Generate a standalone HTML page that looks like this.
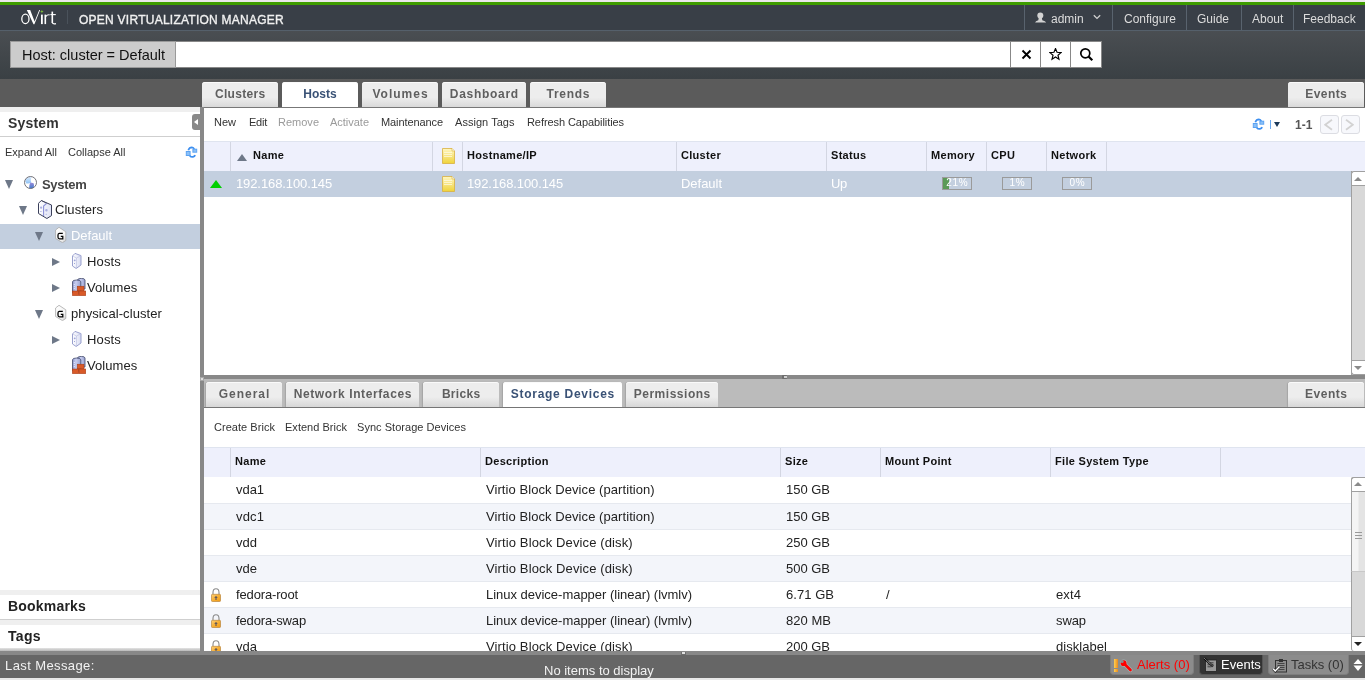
<!DOCTYPE html>
<html><head><meta charset="utf-8"><style>
*{box-sizing:border-box;margin:0;padding:0}
html,body{width:1365px;height:680px;overflow:hidden;background:#fff;font-family:"Liberation Sans",sans-serif;}
.a{position:absolute}
.brand{left:79px;top:13px;color:#f0f0f0;font-size:12px;letter-spacing:0.25px;line-height:14px;-webkit-text-stroke:0.35px #f0f0f0}
.menu{top:5px;height:25px;border-left:1px solid #59636e;color:#dcdcdc;font-size:12px;line-height:25px}
.menu span{position:absolute;top:2px}
.sbtn{top:41px;width:31px;height:27px;background:#fff;border:1px solid #888}
.tab{top:82px;height:25px;background:linear-gradient(#ededed 0,#ededed 62%,#d9d9d9 100%);border-radius:3px 3px 0 0;box-shadow:inset 0 1px 0 #fafafa;font-weight:bold;font-size:12px;color:#5f5f5f;text-align:center;line-height:24px;letter-spacing:0.15px}
.tab.act{background:#fff;color:#3a5276}
.stab{top:382px;height:25px;background:linear-gradient(#ededed 0,#ededed 60%,#d7d7d7 100%);border-radius:3px 3px 0 0;box-shadow:inset 0 1px 0 #fafafa,-1px 0 1px rgba(0,0,0,0.12);font-weight:bold;font-size:12px;color:#5f5f5f;text-align:center;line-height:24px;letter-spacing:0.2px}
.stab.act{background:#fff;color:#3a5276}
.tb{font-size:11px;color:#333;top:116px;line-height:13px}
.dis{color:#9a9a9a}
.gh{background:#eef0fc;border-top:1px solid #dfe4ef}
.vl{width:1px;height:29px;background:#d3d6e2}
.ht{font-weight:bold;font-size:11px;color:#111;line-height:13px}
.tri{width:0;height:0;border-left:4.5px solid transparent;border-right:4.5px solid transparent;border-top:9px solid #6e7888}
.trir{width:0;height:0;border-top:4.5px solid transparent;border-bottom:4.5px solid transparent;border-left:8.5px solid #6e7888}
.tt{font-size:13px;color:#222;line-height:15px}
.rt{font-size:13px;color:#fff;line-height:15px}
.rt2{font-size:13px;color:#222;line-height:15px}
.pgb{top:115px;width:19px;height:19px;border:1px solid #dcdde3;border-radius:3px;background:#f7f8fc}
.pb{top:177px;width:30px;height:13px;border:1px solid #9a9a9a;background:#c3cfdf;font-size:10px;color:#fff;text-align:center;line-height:10px;overflow:hidden;letter-spacing:0.7px;text-indent:0.7px}
.pb span{position:relative}
.sbt{width:14px;background:#d8d8d8;border-left:1px solid #a0a0a0}
.sbb{width:14px;height:14px;background:#fff;border-left:1px solid #a0a0a0}
.stbtn{top:655px;height:20px;border-radius:0 0 4px 4px;font-size:13px;line-height:19px}
</style></head><body>
<div id="wrap" style="position:absolute;left:0;top:0;width:1365px;height:680px;will-change:transform"><div class="a" style="left:0px;top:0px;width:1365px;height:2px;background:#ebe8ea"></div>
<div class="a" style="left:0px;top:2px;width:1365px;height:3px;background:#3f9c00"></div>
<div class="a" style="left:0px;top:5px;width:1365px;height:25px;background:#393f47"></div>
<div class="a" style="left:0px;top:30px;width:1365px;height:1px;background:#55606b"></div>
<div class="a" style="left:0px;top:31px;width:1365px;height:48px;background:linear-gradient(#4a4e52,#3a4044)"></div>
<div class="a" style="left:0px;top:79px;width:1365px;height:28px;background:#5b5b5b"></div>
<svg class="a" style="left:15px;top:5px" width="50" height="25" viewBox="15 5 50 25"><g fill="none" stroke="#fff">
<ellipse cx="25.4" cy="18.9" rx="3.6" ry="4.7" stroke-width="1.3"/>
</g>
<path d="M26.8 10.1 L30.2 10.1 L34.6 21.6 L39.2 10.1 L40.1 10.1 L34.4 24.2 L33.5 24.2 Z" fill="#fff"/>
<rect x="41" y="14.6" width="1.8" height="9.5" fill="#fff"/>
<rect x="44.5" y="14.6" width="1.6" height="9.5" fill="#fff"/>
<path d="M46 16.5 Q47 14.5 49.6 14.8" stroke="#fff" stroke-width="1.2" fill="none"/>
<rect x="51.5" y="11.6" width="1.6" height="11.4" fill="#fff"/>
<path d="M50.4 14.6 H55.8" stroke="#fff" stroke-width="1.1"/>
<path d="M52.3 22.6 Q52.8 24.3 56 23.6" stroke="#fff" stroke-width="1.2" fill="none"/>
<path d="M41.9 9.8 L42.4 11.1 L43.7 11.6 L42.4 12.1 L41.9 13.4 L41.4 12.1 L40.1 11.6 L41.4 11.1 Z" fill="#7cc03a"/></svg>
<div class="a" style="left:67px;top:10px;width:1px;height:14px;background:#4a525b"></div>
<div class="a brand" style="left:79px;top:13px;">OPEN VIRTUALIZATION MANAGER</div>
<div class="a menu" style="left:1024px;width:89px"><span style="left:26px">admin</span></div>
<div class="a menu" style="left:1112px;width:75px"><span style="left:11px">Configure</span></div>
<div class="a menu" style="left:1186px;width:56px"><span style="left:10px">Guide</span></div>
<div class="a menu" style="left:1241px;width:53px"><span style="left:10px">About</span></div>
<div class="a menu" style="left:1293px;width:72px"><span style="left:9px">Feedback</span></div>
<svg class="a" style="left:1035px;top:12px" width="11" height="11" viewBox="-0.3 0 11 11"><circle cx="5" cy="3.6" r="3" fill="#d2d2d2"/><path d="M3.4 6 L6.6 6 L7 8.2 Q10.5 9.2 10.8 10.6 L-0.2 10.6 Q0.1 9.2 3 8.2 Z" fill="#d2d2d2"/></svg>
<svg class="a" style="left:1093px;top:14px" width="8" height="6" viewBox="0 0 8 6"><path d="M0.8 1.2 L4 4.4 L7.2 1.2" stroke="#cfcfcf" stroke-width="1.3" fill="none"/></svg>
<div class="a" style="left:175px;top:41px;width:837px;height:27px;background:#fff;border:1px solid #888"></div>
<div class="a" style="left:10px;top:41px;width:166px;height:27px;background:#cccccc;border:1px solid #9a9a9a;font-size:14.5px;line-height:25px;padding-left:11px;padding-top:1px;color:#111">Host: cluster = Default</div>
<div class="a" style="left:1010px;top:41px;width:31px;height:27px;background:#fff;border:1px solid #888"></div>
<div class="a" style="left:1040px;top:41px;width:31px;height:27px;background:#fff;border:1px solid #888"></div>
<div class="a" style="left:1070px;top:41px;width:32px;height:27px;background:#fff;border:1px solid #888"></div>
<svg class="a" style="left:1021px;top:49px" width="11" height="11" viewBox="0 0 11 11"><path d="M1.5 1.5 L9.5 9.5 M9.5 1.5 L1.5 9.5" stroke="#000" stroke-width="1.9"/></svg>
<svg class="a" style="left:1049px;top:48px" width="13" height="13" viewBox="0 0 13 13"><polygon points="6.50,0.50 8.03,4.30 12.11,4.58 8.97,7.20 9.97,11.17 6.50,9.00 3.03,11.17 4.03,7.20 0.89,4.58 4.97,4.30" fill="none" stroke="#000" stroke-width="1.15" stroke-linejoin="miter"/></svg>
<svg class="a" style="left:1079px;top:47px" width="15" height="15" viewBox="0 0 15 15"><circle cx="6.3" cy="6.3" r="4.5" fill="none" stroke="#000" stroke-width="1.7"/><path d="M9.5 9.5 L13.3 13.3" stroke="#000" stroke-width="2.2"/></svg>
<div class="a tab" style="left:202px;width:76px;letter-spacing:0.3px;text-indent:0.3px">Clusters</div>
<div class="a tab act" style="left:282px;width:76px;letter-spacing:0.07px;text-indent:0.07px">Hosts</div>
<div class="a tab" style="left:362px;width:76px;letter-spacing:1.0px;text-indent:1.0px">Volumes</div>
<div class="a tab" style="left:442px;width:84px;letter-spacing:0.7px;text-indent:0.7px">Dashboard</div>
<div class="a tab" style="left:530px;width:76px;letter-spacing:0.68px;text-indent:0.68px">Trends</div>
<div class="a tab" style="left:1288px;width:76px;letter-spacing:0.45px;text-indent:0.45px">Events</div>
<div class="a" style="left:0px;top:107px;width:200px;height:544px;background:#fff"></div>
<div class="a" style="left:0px;top:107px;width:200px;height:5px;background:#efefef"></div>
<div class="a " style="left:8px;top:115px;font-size:14px;font-weight:bold;color:#333;letter-spacing:0.2px;line-height:16px">System</div>
<div class="a" style="left:0px;top:136px;width:200px;height:1px;background:#cfcfcf"></div>
<div class="a" style="left:192px;top:114px;width:8px;height:16px;background:#888;border-radius:3px 0 0 3px"></div>
<div class="a" style="left:194px;top:119px;width:0;height:0;border-top:3px solid transparent;border-bottom:3px solid transparent;border-right:4px solid #fff"></div>
<div class="a " style="left:5px;top:146px;font-size:11px;color:#333;line-height:13px">Expand All</div>
<div class="a " style="left:68px;top:146px;font-size:11px;color:#333;line-height:13px">Collapse All</div>
<svg class="a" style="left:185px;top:146px" width="13" height="12" viewBox="0 0 13 12"><g fill="none" stroke="#3d8ff0" stroke-width="1.7">
<path d="M3.3 4.2 Q4.3 1.4 6.9 1.4 Q8.6 1.5 9.3 3.2"/>
<path d="M4.6 9.4 Q6 11.2 8 10.9 Q9.6 10.6 10.2 9.2"/>
</g>
<rect x="7.4" y="2.7" width="4.8" height="4" fill="#5aa2f2"/>
<rect x="8.4" y="3.6" width="3" height="2.2" fill="#8cc0f7"/>
<rect x="0.8" y="5" width="4.8" height="5" fill="#5aa2f2"/>
<rect x="1.6" y="6" width="3" height="3" fill="#8cc0f7"/></svg>
<div class="a" style="left:0px;top:224px;width:200px;height:25px;background:#c3cfdf"></div>
<div class="a tri" style="left:5px;top:180px"></div>
<div class="a tri" style="left:19px;top:206px"></div>
<div class="a tri" style="left:35px;top:232px"></div>
<div class="a trir" style="left:52px;top:258px"></div>
<div class="a trir" style="left:52px;top:284px"></div>
<div class="a tri" style="left:35px;top:310px"></div>
<div class="a trir" style="left:52px;top:336px"></div>
<div class="a tt" style="left:42px;top:177px;font-weight:bold;color:#444;font-size:13px;letter-spacing:-0.3px">System</div>
<div class="a tt" style="left:55px;top:202px;;letter-spacing:0.040px">Clusters</div>
<div class="a tt" style="left:71px;top:228px;color:#fff;letter-spacing:-0.027px">Default</div>
<div class="a tt" style="left:87px;top:254px;;letter-spacing:0.154px">Hosts</div>
<div class="a tt" style="left:87px;top:280px;;letter-spacing:0.060px">Volumes</div>
<div class="a tt" style="left:71px;top:306px;;letter-spacing:0.088px">physical-cluster</div>
<div class="a tt" style="left:87px;top:332px;;letter-spacing:0.154px">Hosts</div>
<div class="a tt" style="left:87px;top:358px;;letter-spacing:0.060px">Volumes</div>
<svg class="a" style="left:24px;top:176px" width="13" height="13" viewBox="0 0 13 13"><defs><linearGradient id="gw" x1="0" y1="0" x2="0" y2="1"><stop offset="0" stop-color="#dcecfd"/><stop offset="1" stop-color="#8fc3f6"/></linearGradient>
<linearGradient id="gb" x1="0" y1="0" x2="0" y2="1"><stop offset="0" stop-color="#9a8ad8"/><stop offset="1" stop-color="#3f7ccc"/></linearGradient></defs>
<circle cx="6.5" cy="6.5" r="6" fill="#fff"/>
<path d="M7.6 0.6 Q6.3 3.5 7.3 6.8 Q5 7.8 2 7.2 Q0.6 5 1.8 3 Q4 0.8 7.6 0.6 Z" fill="url(#gw)"/>
<path d="M6.3 6.8 Q8.5 6.3 9.8 7.6 Q10.3 9.8 9.6 11.8 Q7.5 12.9 5.2 12.3 Q4.8 9.3 6.3 6.8 Z" fill="url(#gb)"/>
<circle cx="6.5" cy="6.5" r="6" fill="none" stroke="#6a6a72" stroke-width="0.95"/></svg>
<svg class="a" style="left:38px;top:200px" width="15" height="20" viewBox="0 0 15 20"><defs><linearGradient id="cg" x1="0" y1="0" x2="1" y2="0"><stop offset="0" stop-color="#ffffff"/><stop offset="1" stop-color="#dfe2f5"/></linearGradient></defs>
<path d="M0.5 3.3 L3.3 0.5 L13.5 5 L13.5 15.6 L8.9 18.5 L0.5 13.5 Z" fill="url(#cg)" stroke="#3a3f5a" stroke-width="1" stroke-linejoin="round"/>
<path d="M8.6 3.3 L5.6 6 L5.6 16" stroke="#8a90d8" stroke-width="1.1" fill="none"/>
<path d="M3.3 0.5 L8.6 3.3" stroke="#3a3f5a" stroke-width="0.6" fill="none"/>
<g fill="#a8aee0"><rect x="2" y="6.5" width="2.2" height="2.2" rx="1"/><rect x="2.3" y="11" width="1.2" height="1"/><rect x="7.2" y="9" width="2.4" height="2.4" rx="1"/><rect x="7.6" y="13.8" width="1.2" height="1"/></g></svg>
<svg class="a" style="left:55px;top:227px" width="12" height="16" viewBox="0 0 12 16"><defs><linearGradient id="gcg" x1="0" y1="0" x2="1" y2="1"><stop offset="0" stop-color="#ffffff"/><stop offset="0.7" stop-color="#f4f4f4"/><stop offset="1" stop-color="#c8c8c8"/></linearGradient></defs>
<path d="M0.6 3 L4 0.3 L10.8 4.8 L10.8 13.5 L7.5 15.6 L0.6 11.5 Z" fill="url(#gcg)" stroke="#a8a8a8" stroke-width="0.8" stroke-linejoin="round"/>
<path d="M7.8 6.4 H4.2 Q3 6.5 3 8 L3 10.3 Q3 11.8 4.5 11.8 L7.8 11.8 L7.8 9.3 L5.8 9.3" stroke="#000" stroke-width="1.25" fill="none"/></svg>
<svg class="a" style="left:72px;top:253px" width="10" height="16" viewBox="0 0 10 16"><defs><linearGradient id="hg" x1="0" y1="0" x2="1" y2="0"><stop offset="0" stop-color="#ffffff"/><stop offset="1" stop-color="#d8dcf2"/></linearGradient></defs>
<path d="M0.5 3 L3 0.4 L9 2.6 L9 12 L4.2 15.5 L0.5 13 Z" fill="url(#hg)" stroke="#8f96c8" stroke-width="0.9" stroke-linejoin="round"/>
<path d="M0.7 3 L4.5 5 L9 2.6 M4.5 5 L4.5 15" stroke="#b8bde0" stroke-width="0.6" fill="none"/>
<g fill="#a0a6d8"><rect x="1.8" y="6.5" width="1.8" height="1.8" rx="0.8"/><rect x="2" y="10" width="1" height="1"/></g></svg>
<svg class="a" style="left:72px;top:278px" width="14" height="18" viewBox="0 0 14 18"><defs><linearGradient id="vg" x1="0" y1="0" x2="1" y2="0"><stop offset="0" stop-color="#8a94c8"/><stop offset="0.4" stop-color="#c8cef0"/><stop offset="1" stop-color="#9aa2d0"/></linearGradient></defs>
<path d="M5.5 2 Q5.5 0.4 9.3 0.4 Q13 0.4 13 2 L13 11 L5.5 11 Z" fill="url(#vg)" stroke="#40486a" stroke-width="0.8"/>
<path d="M0.5 3.8 Q0.5 2 4.7 2 Q8.8 2 8.8 3.8 L8.8 15 L0.5 15 Z" fill="url(#vg)" stroke="#40486a" stroke-width="0.8"/>
<g fill="#e8ecff"><rect x="1.8" y="6" width="1" height="1"/><rect x="1.8" y="8" width="1" height="1"/><rect x="1.8" y="10" width="1" height="1"/></g>
<g fill="#d95a28" stroke="#a23a14" stroke-width="0.5">
<rect x="5.2" y="8.2" width="6.8" height="4.7"/><rect x="0.3" y="13" width="6.5" height="4.7"/><rect x="7" y="13" width="6.8" height="4.7"/>
</g></svg>
<svg class="a" style="left:55px;top:305px" width="12" height="16" viewBox="0 0 12 16"><defs><linearGradient id="gcg" x1="0" y1="0" x2="1" y2="1"><stop offset="0" stop-color="#ffffff"/><stop offset="0.7" stop-color="#f4f4f4"/><stop offset="1" stop-color="#c8c8c8"/></linearGradient></defs>
<path d="M0.6 3 L4 0.3 L10.8 4.8 L10.8 13.5 L7.5 15.6 L0.6 11.5 Z" fill="url(#gcg)" stroke="#a8a8a8" stroke-width="0.8" stroke-linejoin="round"/>
<path d="M7.8 6.4 H4.2 Q3 6.5 3 8 L3 10.3 Q3 11.8 4.5 11.8 L7.8 11.8 L7.8 9.3 L5.8 9.3" stroke="#000" stroke-width="1.25" fill="none"/></svg>
<svg class="a" style="left:72px;top:331px" width="10" height="16" viewBox="0 0 10 16"><defs><linearGradient id="hg" x1="0" y1="0" x2="1" y2="0"><stop offset="0" stop-color="#ffffff"/><stop offset="1" stop-color="#d8dcf2"/></linearGradient></defs>
<path d="M0.5 3 L3 0.4 L9 2.6 L9 12 L4.2 15.5 L0.5 13 Z" fill="url(#hg)" stroke="#8f96c8" stroke-width="0.9" stroke-linejoin="round"/>
<path d="M0.7 3 L4.5 5 L9 2.6 M4.5 5 L4.5 15" stroke="#b8bde0" stroke-width="0.6" fill="none"/>
<g fill="#a0a6d8"><rect x="1.8" y="6.5" width="1.8" height="1.8" rx="0.8"/><rect x="2" y="10" width="1" height="1"/></g></svg>
<svg class="a" style="left:72px;top:356px" width="14" height="18" viewBox="0 0 14 18"><defs><linearGradient id="vg" x1="0" y1="0" x2="1" y2="0"><stop offset="0" stop-color="#8a94c8"/><stop offset="0.4" stop-color="#c8cef0"/><stop offset="1" stop-color="#9aa2d0"/></linearGradient></defs>
<path d="M5.5 2 Q5.5 0.4 9.3 0.4 Q13 0.4 13 2 L13 11 L5.5 11 Z" fill="url(#vg)" stroke="#40486a" stroke-width="0.8"/>
<path d="M0.5 3.8 Q0.5 2 4.7 2 Q8.8 2 8.8 3.8 L8.8 15 L0.5 15 Z" fill="url(#vg)" stroke="#40486a" stroke-width="0.8"/>
<g fill="#e8ecff"><rect x="1.8" y="6" width="1" height="1"/><rect x="1.8" y="8" width="1" height="1"/><rect x="1.8" y="10" width="1" height="1"/></g>
<g fill="#d95a28" stroke="#a23a14" stroke-width="0.5">
<rect x="5.2" y="8.2" width="6.8" height="4.7"/><rect x="0.3" y="13" width="6.5" height="4.7"/><rect x="7" y="13" width="6.8" height="4.7"/>
</g></svg>
<div class="a" style="left:0px;top:590px;width:200px;height:5px;background:#efefef"></div>
<div class="a " style="left:8px;top:598px;font-size:14px;font-weight:bold;color:#222;letter-spacing:0.2px;line-height:16px">Bookmarks</div>
<div class="a" style="left:0px;top:619px;width:200px;height:1px;background:#cfcfcf"></div>
<div class="a" style="left:0px;top:620px;width:200px;height:5px;background:#efefef"></div>
<div class="a " style="left:8px;top:628px;font-size:14px;font-weight:bold;color:#222;letter-spacing:0.3px;line-height:16px">Tags</div>
<div class="a" style="left:0px;top:648px;width:200px;height:3px;background:linear-gradient(#e4e4e4,#b8b8b8)"></div>
<div class="a" style="left:200px;top:107px;width:4px;height:548px;background:#888"></div>
<div class="a" style="left:204px;top:107px;width:1161px;height:268px;background:#fff;border-top:1px solid #777"></div>
<div class="a tb" style="left:214px;top:116px;;letter-spacing:-0.002px">New</div>
<div class="a tb" style="left:249px;top:116px;;letter-spacing:-0.239px">Edit</div>
<div class="a tb dis" style="left:278px;top:116px;;letter-spacing:0.007px">Remove</div>
<div class="a tb dis" style="left:330px;top:116px;;letter-spacing:-0.016px">Activate</div>
<div class="a tb" style="left:381px;top:116px;;letter-spacing:-0.090px">Maintenance</div>
<div class="a tb" style="left:455px;top:116px;;letter-spacing:0.042px">Assign Tags</div>
<div class="a tb" style="left:527px;top:116px;;letter-spacing:-0.072px">Refresh Capabilities</div>
<svg class="a" style="left:1252px;top:118px" width="13" height="12" viewBox="0 0 13 12"><g fill="none" stroke="#3d8ff0" stroke-width="1.7">
<path d="M3.3 4.2 Q4.3 1.4 6.9 1.4 Q8.6 1.5 9.3 3.2"/>
<path d="M4.6 9.4 Q6 11.2 8 10.9 Q9.6 10.6 10.2 9.2"/>
</g>
<rect x="7.4" y="2.7" width="4.8" height="4" fill="#5aa2f2"/>
<rect x="8.4" y="3.6" width="3" height="2.2" fill="#8cc0f7"/>
<rect x="0.8" y="5" width="4.8" height="5" fill="#5aa2f2"/>
<rect x="1.6" y="6" width="3" height="3" fill="#8cc0f7"/></svg>
<div class="a" style="left:1270px;top:120px;width:1px;height:9px;background:#6aa8f0"></div>
<div class="a" style="left:1274px;top:122px;width:0;height:0;border-left:3.5px solid transparent;border-right:3.5px solid transparent;border-top:5px solid #1d3a5a"></div>
<div class="a " style="left:1295px;top:118px;font-size:12px;font-weight:bold;color:#555;line-height:14px">1-1</div>
<div class="a" style="left:1320px;top:115px;width:19px;height:19px;border:1px solid #dcdde3;border-radius:3px;background:#f7f8fc"></div>
<div class="a" style="left:1341px;top:115px;width:19px;height:19px;border:1px solid #dcdde3;border-radius:3px;background:#f7f8fc"></div>
<svg class="a" style="left:1324px;top:119px" width="9" height="12" viewBox="0 0 9 12"><path d="M8 0.8 L1.2 5.8 L8 10.8" stroke="#d2d2d2" stroke-width="1.8" fill="none"/></svg>
<svg class="a" style="left:1345px;top:119px" width="9" height="12" viewBox="0 0 9 12"><path d="M1 0.8 L7.8 5.8 L1 10.8" stroke="#d2d2d2" stroke-width="1.8" fill="none"/></svg>
<div class="a" style="left:204px;top:141px;width:1161px;height:30px;background:#eef0fc;border-top:1px solid #dfe4ef"></div>
<div class="a" style="left:230px;top:142px;width:1px;height:29px;background:#d3d6e2"></div>
<div class="a" style="left:432px;top:142px;width:1px;height:29px;background:#d3d6e2"></div>
<div class="a" style="left:462px;top:142px;width:1px;height:29px;background:#d3d6e2"></div>
<div class="a" style="left:676px;top:142px;width:1px;height:29px;background:#d3d6e2"></div>
<div class="a" style="left:826px;top:142px;width:1px;height:29px;background:#d3d6e2"></div>
<div class="a" style="left:926px;top:142px;width:1px;height:29px;background:#d3d6e2"></div>
<div class="a" style="left:986px;top:142px;width:1px;height:29px;background:#d3d6e2"></div>
<div class="a" style="left:1046px;top:142px;width:1px;height:29px;background:#d3d6e2"></div>
<div class="a" style="left:1106px;top:142px;width:1px;height:29px;background:#d3d6e2"></div>
<div class="a" style="left:237px;top:154px;width:0;height:0;border-left:5px solid transparent;border-right:5px solid transparent;border-bottom:7px solid #6e7888"></div>
<div class="a ht" style="left:253px;top:149px;letter-spacing:0.3px">Name</div>
<div class="a ht" style="left:467px;top:149px;letter-spacing:0.3px">Hostname/IP</div>
<div class="a ht" style="left:681px;top:149px;letter-spacing:0.3px">Cluster</div>
<div class="a ht" style="left:831px;top:149px;letter-spacing:0.3px">Status</div>
<div class="a ht" style="left:931px;top:149px;letter-spacing:0.3px">Memory</div>
<div class="a ht" style="left:991px;top:149px;letter-spacing:0.3px">CPU</div>
<div class="a ht" style="left:1051px;top:149px;letter-spacing:0.3px">Network</div>
<svg class="a" style="left:442px;top:148px" width="13" height="16" viewBox="0 0 13 16"><defs><linearGradient id="ng" x1="0" y1="0" x2="0" y2="1"><stop offset="0" stop-color="#fff7c0"/><stop offset="0.55" stop-color="#f6e27a"/><stop offset="1" stop-color="#f0d438"/></linearGradient></defs>
<path d="M0.5 0.5 L10 0.5 L12.5 3 L12.5 15.5 L0.5 15.5 Z" fill="url(#ng)" stroke="#d8b040" stroke-width="0.8"/>
<path d="M10 0.5 L10 3 L12.5 3" fill="#fffbe0" stroke="#d8b040" stroke-width="0.6"/>
<g stroke="#fffbe6" stroke-width="0.7"><path d="M2 4.5 H10 M2 6.5 H10 M2 8.5 H10"/></g></svg>
<div class="a" style="left:204px;top:171px;width:1147px;height:26px;background:#c3cfdf"></div>
<div class="a" style="left:210px;top:180px;width:0;height:0;border-left:6.5px solid transparent;border-right:6.5px solid transparent;border-bottom:8px solid #00d000"></div>
<svg class="a" style="left:442px;top:176px" width="13" height="16" viewBox="0 0 13 16"><defs><linearGradient id="ng" x1="0" y1="0" x2="0" y2="1"><stop offset="0" stop-color="#fff7c0"/><stop offset="0.55" stop-color="#f6e27a"/><stop offset="1" stop-color="#f0d438"/></linearGradient></defs>
<path d="M0.5 0.5 L10 0.5 L12.5 3 L12.5 15.5 L0.5 15.5 Z" fill="url(#ng)" stroke="#d8b040" stroke-width="0.8"/>
<path d="M10 0.5 L10 3 L12.5 3" fill="#fffbe0" stroke="#d8b040" stroke-width="0.6"/>
<g stroke="#fffbe6" stroke-width="0.7"><path d="M2 4.5 H10 M2 6.5 H10 M2 8.5 H10"/></g></svg>
<div class="a rt" style="left:236px;top:176px;;letter-spacing:-0.106px">192.168.100.145</div>
<div class="a rt" style="left:467px;top:176px;;letter-spacing:-0.106px">192.168.100.145</div>
<div class="a rt" style="left:681px;top:176px;;letter-spacing:-0.027px">Default</div>
<div class="a rt" style="left:831px;top:176px;;letter-spacing:-0.309px">Up</div>
<div class="a pb" style="left:942px"><div style="position:absolute;left:0;top:0;width:6px;height:11px;background:#5b9a58"></div><span>21%</span></div>
<div class="a pb" style="left:1002px"><span>1%</span></div>
<div class="a pb" style="left:1062px"><span>0%</span></div>
<div class="a" style="left:1351px;top:171px;width:14px;height:205px;background:#d8d8d8;border-left:1px solid #a0a0a0"></div>
<div class="a" style="left:1351px;top:171px;width:14px;height:15px;background:#fff;border-left:1px solid #a0a0a0;border-top:1px solid #a0a0a0;border-bottom:1px solid #a0a0a0;border-radius:3px 0 0 0"></div>
<div class="a" style="left:1354px;top:177px;width:0;height:0;border-left:4px solid transparent;border-right:4px solid transparent;border-bottom:4.5px solid #8a8a8a"></div>
<div class="a" style="left:1351px;top:360px;width:14px;height:15px;background:#fff;border-left:1px solid #a0a0a0;border-top:1px solid #a0a0a0;border-bottom:1px solid #a0a0a0;border-radius:0 0 0 3px"></div>
<div class="a" style="left:1354px;top:366px;width:0;height:0;border-left:4px solid transparent;border-right:4px solid transparent;border-top:4.5px solid #8a8a8a"></div>
<div class="a" style="left:204px;top:375px;width:1161px;height:4px;background:#888"></div>
<div class="a" style="left:204px;top:379px;width:1161px;height:29px;background:#bbbbbb;border-bottom:1px solid #777"></div>
<div class="a stab" style="left:206px;width:76px;letter-spacing:1.0px;text-indent:1.0px">General</div>
<div class="a stab" style="left:286px;width:133px;letter-spacing:0.61px;text-indent:0.61px">Network Interfaces</div>
<div class="a stab" style="left:423px;width:76px;letter-spacing:0.3px;text-indent:0.3px">Bricks</div>
<div class="a stab act" style="left:503px;width:119px;letter-spacing:0.72px;text-indent:0.72px">Storage Devices</div>
<div class="a stab" style="left:626px;width:92px;letter-spacing:0.52px;text-indent:0.52px">Permissions</div>
<div class="a stab" style="left:1288px;width:76px;letter-spacing:0.55px;text-indent:0.55px">Events</div>
<div class="a" style="left:204px;top:408px;width:1161px;height:243px;background:#fff"></div>
<div class="a tb" style="left:214px;top:421px;top:421px;letter-spacing:0.040px">Create Brick</div>
<div class="a tb" style="left:285px;top:421px;top:421px;letter-spacing:0.021px">Extend Brick</div>
<div class="a tb" style="left:357px;top:421px;top:421px;letter-spacing:0.039px">Sync Storage Devices</div>
<div class="a" style="left:204px;top:447px;width:1161px;height:30px;background:#eef0fc;border-top:1px solid #dfe4ef"></div>
<div class="a" style="left:230px;top:448px;width:1px;height:29px;background:#d3d6e2"></div>
<div class="a" style="left:480px;top:448px;width:1px;height:29px;background:#d3d6e2"></div>
<div class="a" style="left:780px;top:448px;width:1px;height:29px;background:#d3d6e2"></div>
<div class="a" style="left:880px;top:448px;width:1px;height:29px;background:#d3d6e2"></div>
<div class="a" style="left:1050px;top:448px;width:1px;height:29px;background:#d3d6e2"></div>
<div class="a" style="left:1220px;top:448px;width:1px;height:29px;background:#d3d6e2"></div>
<div class="a ht" style="left:235px;top:455px;letter-spacing:0.3px">Name</div>
<div class="a ht" style="left:485px;top:455px;letter-spacing:0.3px">Description</div>
<div class="a ht" style="left:785px;top:455px;letter-spacing:0.3px">Size</div>
<div class="a ht" style="left:885px;top:455px;letter-spacing:0.3px">Mount Point</div>
<div class="a ht" style="left:1055px;top:455px;letter-spacing:0.3px">File System Type</div>
<div class="a" style="left:204px;top:477px;width:1147px;height:26px;background:#fff"></div>
<div class="a rt2" style="left:236px;top:482px;;letter-spacing:-0.047px">vda1</div>
<div class="a rt2" style="left:486px;top:482px;;letter-spacing:0.068px">Virtio Block Device (partition)</div>
<div class="a rt2" style="left:786px;top:482px;;letter-spacing:-0.014px">150 GB</div>
<div class="a" style="left:204px;top:503px;width:1147px;height:26px;background:#f3f5fa;border-top:1px solid #e6e9ef"></div>
<div class="a rt2" style="left:236px;top:509px;;letter-spacing:0.135px">vdc1</div>
<div class="a rt2" style="left:486px;top:509px;;letter-spacing:0.068px">Virtio Block Device (partition)</div>
<div class="a rt2" style="left:786px;top:509px;;letter-spacing:-0.014px">150 GB</div>
<div class="a" style="left:204px;top:529px;width:1147px;height:26px;background:#fff;border-top:1px solid #e6e9ef"></div>
<div class="a rt2" style="left:236px;top:535px;;letter-spacing:0.013px">vdd</div>
<div class="a rt2" style="left:486px;top:535px;;letter-spacing:0.125px">Virtio Block Device (disk)</div>
<div class="a rt2" style="left:786px;top:535px;;letter-spacing:-0.014px">250 GB</div>
<div class="a" style="left:204px;top:555px;width:1147px;height:26px;background:#f3f5fa;border-top:1px solid #e6e9ef"></div>
<div class="a rt2" style="left:236px;top:561px;;letter-spacing:0.013px">vde</div>
<div class="a rt2" style="left:486px;top:561px;;letter-spacing:0.125px">Virtio Block Device (disk)</div>
<div class="a rt2" style="left:786px;top:561px;;letter-spacing:-0.014px">500 GB</div>
<div class="a" style="left:204px;top:581px;width:1147px;height:26px;background:#fff;border-top:1px solid #e6e9ef"></div>
<div class="a rt2" style="left:236px;top:587px;;letter-spacing:-0.145px">fedora-root</div>
<div class="a rt2" style="left:486px;top:587px;;letter-spacing:-0.017px">Linux device-mapper (linear) (lvmlv)</div>
<div class="a rt2" style="left:786px;top:587px;;letter-spacing:0.043px">6.71 GB</div>
<div class="a rt2" style="left:886px;top:587px;;letter-spacing:0.388px">/</div>
<div class="a rt2" style="left:1056px;top:587px;;letter-spacing:0.107px">ext4</div>
<svg class="a" style="left:211px;top:588px" width="10" height="14" viewBox="0 0 10 14"><defs><linearGradient id="lg" x1="0" y1="0" x2="1" y2="1"><stop offset="0" stop-color="#ffd27a"/><stop offset="0.45" stop-color="#f7b23a"/><stop offset="1" stop-color="#f29a12"/></linearGradient></defs>
<path d="M2 6.5 L2 4.5 Q2 0.8 5 0.8 Q8 0.8 8 4.5 L8 6.5" fill="none" stroke="#8a8a8a" stroke-width="1.1"/>
<rect x="0.5" y="6.3" width="9" height="7.2" rx="0.8" fill="url(#lg)" stroke="#b07a30" stroke-width="0.6"/>
<path d="M5 12 L5 8.8 M3.8 10 L5 8.5 L6.2 10" stroke="#4a4a60" stroke-width="1" fill="none"/></svg>
<div class="a" style="left:204px;top:607px;width:1147px;height:26px;background:#f3f5fa;border-top:1px solid #e6e9ef"></div>
<div class="a rt2" style="left:236px;top:613px;;letter-spacing:-0.140px">fedora-swap</div>
<div class="a rt2" style="left:486px;top:613px;;letter-spacing:-0.017px">Linux device-mapper (linear) (lvmlv)</div>
<div class="a rt2" style="left:786px;top:613px;;letter-spacing:0.033px">820 MB</div>
<div class="a rt2" style="left:1056px;top:613px;;letter-spacing:-0.087px">swap</div>
<svg class="a" style="left:211px;top:614px" width="10" height="14" viewBox="0 0 10 14"><defs><linearGradient id="lg" x1="0" y1="0" x2="1" y2="1"><stop offset="0" stop-color="#ffd27a"/><stop offset="0.45" stop-color="#f7b23a"/><stop offset="1" stop-color="#f29a12"/></linearGradient></defs>
<path d="M2 6.5 L2 4.5 Q2 0.8 5 0.8 Q8 0.8 8 4.5 L8 6.5" fill="none" stroke="#8a8a8a" stroke-width="1.1"/>
<rect x="0.5" y="6.3" width="9" height="7.2" rx="0.8" fill="url(#lg)" stroke="#b07a30" stroke-width="0.6"/>
<path d="M5 12 L5 8.8 M3.8 10 L5 8.5 L6.2 10" stroke="#4a4a60" stroke-width="1" fill="none"/></svg>
<div class="a" style="left:204px;top:633px;width:1147px;height:18px;background:#fff;border-top:1px solid #e6e9ef"></div>
<div class="a rt2" style="left:236px;top:639px;;letter-spacing:0.013px">vda</div>
<div class="a rt2" style="left:486px;top:639px;;letter-spacing:0.125px">Virtio Block Device (disk)</div>
<div class="a rt2" style="left:786px;top:639px;;letter-spacing:-0.014px">200 GB</div>
<div class="a rt2" style="left:1056px;top:639px;;letter-spacing:0.046px">disklabel</div>
<svg class="a" style="left:211px;top:640px" width="10" height="14" viewBox="0 0 10 14"><defs><linearGradient id="lg" x1="0" y1="0" x2="1" y2="1"><stop offset="0" stop-color="#ffd27a"/><stop offset="0.45" stop-color="#f7b23a"/><stop offset="1" stop-color="#f29a12"/></linearGradient></defs>
<path d="M2 6.5 L2 4.5 Q2 0.8 5 0.8 Q8 0.8 8 4.5 L8 6.5" fill="none" stroke="#8a8a8a" stroke-width="1.1"/>
<rect x="0.5" y="6.3" width="9" height="7.2" rx="0.8" fill="url(#lg)" stroke="#b07a30" stroke-width="0.6"/>
<path d="M5 12 L5 8.8 M3.8 10 L5 8.5 L6.2 10" stroke="#4a4a60" stroke-width="1" fill="none"/></svg>
<div class="a" style="left:1351px;top:477px;width:14px;height:174px;background:#d8d8d8;border-left:1px solid #a0a0a0;border-top:1px solid #a0a0a0;border-radius:3px 0 0 3px"></div>
<div class="a" style="left:1351px;top:477px;width:14px;height:15px;background:#fff;border-left:1px solid #a0a0a0;border-top:1px solid #a0a0a0;border-radius:3px 0 0 0"></div>
<div class="a" style="left:1351px;top:491px;width:14px;height:81px;background:linear-gradient(90deg,#f4f4f4 0,#f4f4f4 45%,#e4e4e4 55%,#e4e4e4 100%);border-left:1px solid #a0a0a0;border-top:1px solid #a0a0a0;border-bottom:1px solid #c8c8c8"></div>
<div class="a" style="left:1354px;top:482px;width:0;height:0;border-left:4px solid transparent;border-right:4px solid transparent;border-bottom:4.5px solid #8a8a8a"></div>
<div class="a" style="left:1355px;top:532px;width:7px;height:1px;background:#999"></div>
<div class="a" style="left:1355px;top:535px;width:7px;height:1px;background:#999"></div>
<div class="a" style="left:1355px;top:538px;width:7px;height:1px;background:#999"></div>
<div class="a" style="left:1351px;top:636px;width:14px;height:15px;background:#fff;border-left:1px solid #a0a0a0;border-top:1px solid #a0a0a0;border-radius:0 0 0 3px"></div>
<div class="a" style="left:1354px;top:642px;width:0;height:0;border-left:4px solid transparent;border-right:4px solid transparent;border-top:4.5px solid #222"></div>
<div class="a" style="left:782px;top:375px;width:5px;height:4px;background:#6e6e6e;border-radius:1px"></div>
<div class="a" style="left:784px;top:376px;width:3px;height:2px;background:#cfcfcf"></div>
<div class="a" style="left:200px;top:377px;width:4px;height:4px;background:#a8a8a8"></div>
<div class="a" style="left:201px;top:378px;width:2px;height:2px;background:#dedede"></div>
<div class="a" style="left:0px;top:651px;width:1365px;height:4px;background:#888"></div>
<div class="a" style="left:0px;top:655px;width:1365px;height:23px;background:#666"></div>
<div class="a" style="left:0px;top:678px;width:1365px;height:2px;background:#e8e8e8"></div>
<div class="a " style="left:5px;top:658px;font-size:13px;color:#f2f2f2;line-height:15px;letter-spacing:0.4px">Last Message:</div>
<div class="a " style="left:544px;top:663px;font-size:13px;color:#f2f2f2;line-height:15px">No items to display</div>
<div class="a stbtn" style="left:1110px;width:84px;background:#8c8c8c;border:1px solid #7e7e7e;border-top:0"></div>
<div class="a " style="left:1137px;top:657px;font-size:13px;color:#ff0000;line-height:15px">Alerts (0)</div>
<svg class="a" style="left:1113px;top:658px" width="20" height="16" viewBox="0 0 20 16"><defs><linearGradient id="ag" x1="0" y1="0" x2="1" y2="0"><stop offset="0" stop-color="#ffd050"/><stop offset="1" stop-color="#e88a20"/></linearGradient></defs>
<rect x="1" y="1" width="4" height="9" fill="url(#ag)"/><rect x="1" y="11" width="4" height="3" fill="url(#ag)"/>
<g stroke="#b0c8c8" stroke-width="4" stroke-linecap="round" fill="none" opacity="0.6"><path d="M11 5.5 L17.5 12"/></g>
<circle cx="10.6" cy="5.2" r="3.6" fill="#b0c8c8" opacity="0.6"/>
<path d="M11 5.5 L17.5 12" stroke="#f00" stroke-width="2.6" stroke-linecap="round"/>
<circle cx="10.6" cy="5.2" r="2.9" fill="#f00"/>
<circle cx="9.2" cy="3.6" r="1.5" fill="#8c8c8c"/></svg>
<div class="a stbtn" style="left:1199px;width:64px;background:#333;border:1px solid #555;border-top:0"></div>
<div class="a " style="left:1221px;top:657px;font-size:13px;color:#fff;line-height:15px">Events</div>
<svg class="a" style="left:1203px;top:657px" width="15" height="16" viewBox="0 0 15 16"><rect x="2.5" y="3" width="11" height="11.5" fill="#9a9a9a" stroke="#222" stroke-width="0.8"/>
<path d="M4.5 5.8 H10.5 M4.5 7.8 H10.5 M4.5 9.8 H8.5" stroke="#333" stroke-width="0.9"/>
<path d="M1.2 1.2 L10 9.5" stroke="#000" stroke-width="2"/>
<path d="M1.5 1.5 L10 9.3" stroke="#eee" stroke-width="1" stroke-dasharray="1 0.6"/></svg>
<div class="a stbtn" style="left:1268px;width:81px;background:#8c8c8c;border:1px solid #7e7e7e;border-top:0"></div>
<div class="a " style="left:1291px;top:657px;font-size:13px;color:#333;line-height:15px">Tasks (0)</div>
<svg class="a" style="left:1272px;top:658px" width="16" height="16" viewBox="0 0 16 16"><rect x="3.5" y="2.5" width="11" height="11.5" fill="#8c8c8c" stroke="#333" stroke-width="1"/>
<rect x="7" y="1" width="4" height="3" fill="#333"/>
<path d="M5.5 5.5 H12.5 M5.5 7.5 H12.5 M5.5 9.5 H12.5 M7 11.5 H12.5" stroke="#333" stroke-width="0.8"/>
<path d="M1.2 10.8 L3.2 13 L7.5 8.5" stroke="#222" stroke-width="2.6" fill="none"/>
<path d="M1.2 10.8 L3.2 13 L7.5 8.5" stroke="#fff" stroke-width="1.5" fill="none"/></svg>
<svg class="a" style="left:1353px;top:659px" width="10" height="13" viewBox="0 0 10 13"><path d="M5 0 L9.5 5 L0.5 5 Z M0.5 6.5 L9.5 6.5 L5 12 Z" fill="#fff"/></svg>
<div class="a" style="left:681px;top:652px;width:5px;height:3px;background:#6e6e6e"></div>
<div class="a" style="left:682px;top:652px;width:3px;height:2px;background:#e0e0e0"></div></div>
</body></html>
